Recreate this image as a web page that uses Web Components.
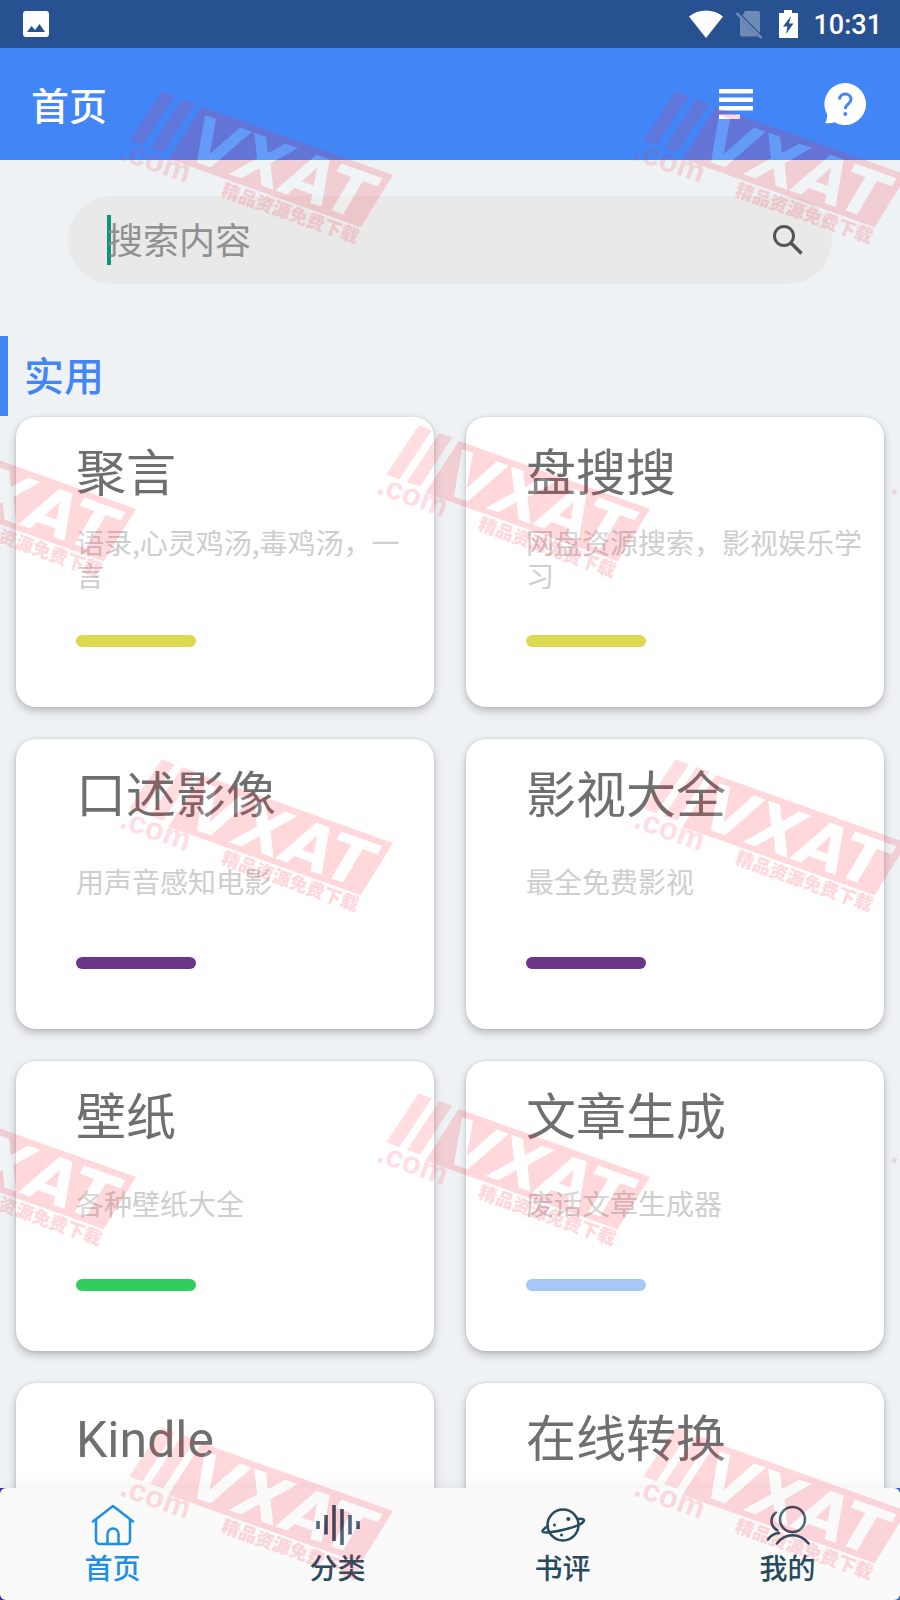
<!DOCTYPE html>
<html lang="zh-CN">
<head>
<meta charset="utf-8">
<meta name="viewport" content="width=device-width, initial-scale=1">
<title>首页</title>
<style>
  html, body {
    margin: 0;
    height: 100%;
  }

  body {
    background: #eef2f5;
    font-family: Roboto, "Noto Sans CJK SC", sans-serif;
    color: #6f6f6f;
  }
</style>
</head>
<body>

<app-screen>
  <status-bar slot="top" time="10:31"></status-bar>
  <app-header slot="top">首页</app-header>

  <search-box placeholder="搜索内容"></search-box>
  <section-title>实用</section-title>
  <card-grid>
    <tool-card color="#dcd850">聚言<span slot="desc">语录,心灵鸡汤,毒鸡汤，一言</span></tool-card>
    <tool-card color="#dcd850">盘搜搜<span slot="desc">网盘资源搜索，影视娱乐学习</span></tool-card>
    <tool-card color="#6b358a">口述影像<span slot="desc">用声音感知电影</span></tool-card>
    <tool-card color="#6b358a">影视大全<span slot="desc">最全免费影视</span></tool-card>
    <tool-card color="#32cd5c">壁纸<span slot="desc">各种壁纸大全</span></tool-card>
    <tool-card color="#a6c8f6">文章生成<span slot="desc">废话文章生成器</span></tool-card>
    <tool-card color="#a6c8f6">Kindle</tool-card>
    <tool-card color="#a6c8f6">在线转换</tool-card>
  </card-grid>

  <tab-bar slot="bottom">
    <tab-item icon="home" active>首页</tab-item>
    <tab-item icon="wave">分类</tab-item>
    <tab-item icon="planet">书评</tab-item>
    <tab-item icon="user">我的</tab-item>
  </tab-bar>

  <stamp-layer slot="overlay" rows="5"></stamp-layer>
</app-screen>

<script>
(function () {
  const define = (name, html) => {
    customElements.define(name, class extends HTMLElement {
      constructor() {
        super();
        this.attachShadow({ mode: "open" });
      }

      connectedCallback() {
        this.shadowRoot.innerHTML = typeof html === "function" ? html(this) : html;
      }
    });
  };

  define("app-screen", `
    <style>
      :host {
        position: relative;
        display: flex;
        flex-direction: column;
        height: 100vh;
        overflow: hidden;
      }
      main {
        flex: 1;
        min-height: 0;
        overflow-y: auto;
        scrollbar-width: none;
        padding-top: 36px;
      }
    </style>
    <slot name="top"></slot>
    <main><slot></slot></main>
    <slot name="bottom"></slot>
    <slot name="overlay"></slot>
  `);

  define("status-bar", (el) => `
    <style>
      :host {
        display: flex;
        align-items: center;
        height: 48px;
        padding: 0 18px 0 22px;
        background: #285192;
        color: #fff;
      }
      .right {
        margin-left: auto;
        display: flex;
        align-items: center;
        gap: 11px;
      }
      svg { display: block; }
      time { padding-top: 2px; font-size: 27px; line-height: 46px; font-weight: 500; }
    </style>
    <svg width="28" height="28" viewBox="0 0 28 28">
      <rect x="1" y="1" width="26" height="26" rx="3" fill="#fff"/>
      <path d="M5 22 9.500 16l3.500 4 4.500-6L23 22z" fill="#285192"/>
    </svg>
    <div class="right">
      <svg width="36" height="30" viewBox="0 0 36 30">
        <path d="M18 29 1 7.500C10-.5 26-.5 35 7.500z" fill="#fff"/>
      </svg>
      <svg width="28" height="30" viewBox="0 0 28 30">
        <path d="M10 2h13a2 2 0 0 1 2 2v20L7.500 6.500zM5 9l18 18.500H7a2 2 0 0 1-2-2z" fill="#6f8ab6"/>
        <path d="M1.500 4 26.500 29" stroke="#6f8ab6" stroke-width="2.500"/>
      </svg>
      <svg width="28" height="30" viewBox="0 0 28 30">
        <path d="M5 4h5V1h8v3h6v25H5z" fill="#fff"/>
        <path d="M17 7 9 17.500h4.500L12 25l7.500-10.500H15z" fill="#285192"/>
      </svg>
      <time>${el.getAttribute("time")}</time>
    </div>
  `);

  define("app-header", `
    <style>
      :host {
        display: flex;
        align-items: center;
        height: 112px;
        padding: 0 34px 0 31px;
        background: #4285f7;
        color: #fff;
      }
      h1 {
        flex: 1;
        margin: 0;
        padding-top: 6px;
        font-size: 38px;
        line-height: 56px;
        font-weight: 500;
      }
      button {
        border: 0;
        padding: 0;
        margin-left: 68px;
        background: none;
      }
      svg { display: block; }
    </style>
    <h1><slot></slot></h1>
    <button aria-label="目录">
      <svg width="36" height="44" viewBox="0 0 36 44" fill="#fff">
        <path d="M1 7h34v4.500H1zM1 15.500h34V20H1zM1 24h34v4.500H1zM1 32.500h21V37H1z"/>
      </svg>
    </button>
    <button aria-label="帮助">
      <svg width="44" height="44" viewBox="0 0 44 44">
        <path d="M23 1a21 21 0 1 1-10.500 39.200Q8 42 3 41q2-2.500 2.200-8.500A21 21 0 0 1 23 1z" fill="#fff"/>
        <path d="M17.500 17.500c0-7.500 11.500-7.500 11.500 0 0 4.500-5.700 4.500-5.700 9.500" fill="none" stroke="#4285f7" stroke-width="3"/>
        <circle cx="23.300" cy="32" r="2" fill="#4285f7"/>
      </svg>
    </button>
  `);

  define("search-box", (el) => `
    <style>
      :host { display: block; padding: 0 68px; }
      form {
        display: flex;
        align-items: center;
        height: 88px;
        padding: 0 26px 0 39px;
        box-sizing: border-box;
        border-radius: 44px;
        background: #e9e9e9;
      }
      .caret {
        width: 4px;
        height: 50px;
        margin-right: -4px;
        background: #12917c;
      }
      input {
        flex: 1;
        min-width: 0;
        height: 60px;
        padding: 4px 0 0;
        box-sizing: border-box;
        border: 0;
        outline: 0;
        background: none;
        font: inherit;
        font-size: 36px;
        color: #555;
      }
      input::placeholder { color: #909090; opacity: 1; }
      button { border: 0; padding: 0; background: none; }
      svg { display: block; }
    </style>
    <form>
      <span class="caret"></span>
      <input type="text" aria-label="搜索" placeholder="${el.getAttribute("placeholder")}">
      <button type="button" aria-label="搜索">
        <svg width="36" height="36" viewBox="0 0 36 36" fill="none" stroke="#555">
          <circle cx="14" cy="14" r="9.500" stroke-width="3"/>
          <path d="M21 21 31.500 31.500" stroke-width="3.600"/>
        </svg>
      </button>
    </form>
  `);

  define("section-title", `
    <style>
      :host { display: block; padding-top: 52px; }
      h2 {
        margin: 0;
        padding: 4px 0 0 16px;
        border-left: 8px solid #4285f7;
        font-size: 40px;
        line-height: 76px;
        font-weight: 500;
        color: #4285f7;
      }
    </style>
    <h2><slot></slot></h2>
  `);

  define("card-grid", `
    <style>
      :host {
        display: grid;
        grid-template-columns: 1fr 1fr;
        gap: 32px;
        padding: 1px 16px 32px;
      }
    </style>
    <slot></slot>
  `);

  define("tool-card", (el) => `
    <style>
      :host { display: block; }
      a {
        display: flex;
        flex-direction: column;
        min-height: 290px;
        box-sizing: border-box;
        padding: 24px 18px 60px 60px;
        border-radius: 20px;
        background: #fff;
        box-shadow: 0 4px 8px rgba(0, 0, 0, .22), 0 0 3px rgba(0, 0, 0, .12);
        color: inherit;
        text-decoration: none;
      }
      h3 {
        margin: 0;
        font-size: 50px;
        line-height: 66px;
        font-weight: 400;
      }
      p {
        flex: 1;
        display: flex;
        align-items: center;
        margin: 0 0 24px;
        font-family: "Noto Sans CJK SC", sans-serif;
        font-size: 28px;
        line-height: 33px;
        color: #cecece;
      }
      i {
        width: 120px;
        height: 12px;
        border-radius: 6px;
        background: ${el.getAttribute("color")};
      }
    </style>
    <a href="#">
      <h3><slot></slot></h3>
      <p><slot name="desc"></slot></p>
      <i></i>
    </a>
  `);

  define("tab-bar", `
    <style>
      :host {
        display: block;
        position: relative;
        background: linear-gradient(90deg, #3c2ea8, #2f62dc);
        box-shadow: 0 -2px 16px rgba(0, 0, 0, .06);
      }
      nav {
        display: flex;
        height: 112px;
        border-radius: 6px;
        background: #fafafa;
      }
    </style>
    <nav><slot></slot></nav>
  `);

  const icons = {
    home: `<path d="M2 18.500 22 3l20 15.500M5 17v20a4 4 0 0 0 4 4h26a4 4 0 0 0 4-4V17M16.500 41V31a5.500 5.500 0 0 1 11 0v10"/>`,
    wave: `<path stroke-width="3.600" stroke-linecap="butt" d="M2 18v8M10 12v19.500M18 2v36M26 6v36M34 12v19.500M42 18v8"/>`,
    planet: `<circle cx="22" cy="22" r="15.500"/>
      <path d="M7 23c-4 2.500-6 4.500-5.500 5.500C3.500 32 42 24 43 17.500c.2-1.500-2.500-2-6.500-1.500"/>
      <g fill="currentColor" stroke="none"><circle cx="27.300" cy="16" r="2"/><circle cx="13.500" cy="22" r="1.500"/><circle cx="20.500" cy="32" r="1.500"/></g>`,
    user: `<circle cx="26.500" cy="16.500" r="12.500"/>
      <path d="M11 40.500c8-11 23-11 31.500 0M10 9.500c-6.500 5-6 13.500 1.500 18M2 36.500c2.500-4 6-6 11-6.500"/>`
  };

  define("tab-item", (el) => `
    <style>
      :host { flex: 1; display: block; color: #264a5e; }
      :host([active]) { color: #1e8fe6; }
      a {
        display: flex;
        flex-direction: column;
        align-items: center;
        gap: 3px;
        padding-top: 15px;
        color: inherit;
        text-decoration: none;
        font-size: 28px;
        line-height: 40px;
        font-weight: 500;
      }
      svg { display: block; overflow: visible; }
    </style>
    <a href="#">
      <svg width="44" height="44" viewBox="0 0 44 44" fill="none" stroke="currentColor"
        stroke-width="2.500" stroke-linecap="round" stroke-linejoin="round">${icons[el.getAttribute("icon")]}</svg>
      <slot></slot>
    </a>
  `);

  // brick pattern of stamps, every second row starts half a tile to the left
  define("stamp-layer", (el) => `
    <style>
      :host {
        position: absolute;
        inset: 0;
        overflow: hidden;
        pointer-events: none;
      }
      div { display: flex; width: max-content; }
      div:nth-of-type(even) { margin-left: -257px; }
    </style>
    ${"<div><stamp-mark></stamp-mark><stamp-mark></stamp-mark><stamp-mark></stamp-mark></div>".repeat(Number(el.getAttribute("rows")))}
  `);

  // drawn from the top right corner of the red plate
  define("stamp-mark", `
    <style>
      :host { display: block; width: 514px; height: 334px; opacity: .18; }
      svg { display: block; }
    </style>
    <svg width="514" height="334" viewBox="0 0 514 334" fill="#ff2c44" aria-hidden="true">
      <g transform="translate(393 175) rotate(19.600)">
        <path d="M-246-1h14l-14 57h-14zM-224-1h14l-14 57h-14z" opacity=".85"/>
        <path d="M-203 0H0l-13 60h-204z"/>
        <text x="-202" y="54" font-family="DejaVu Sans" font-size="65" font-weight="700"
          font-style="italic" font-kerning="none" fill="#fff">VXAT</text>
        <text x="-264" y="77" font-family="Liberation Sans" font-size="31" font-weight="700" opacity=".85">.com</text>
        <text x="-156" y="77" font-family="Noto Sans CJK SC" font-size="18" font-weight="900">精品资源免费下载</text>
      </g>
    </svg>
  `);
})();
</script>
</body>
</html>
